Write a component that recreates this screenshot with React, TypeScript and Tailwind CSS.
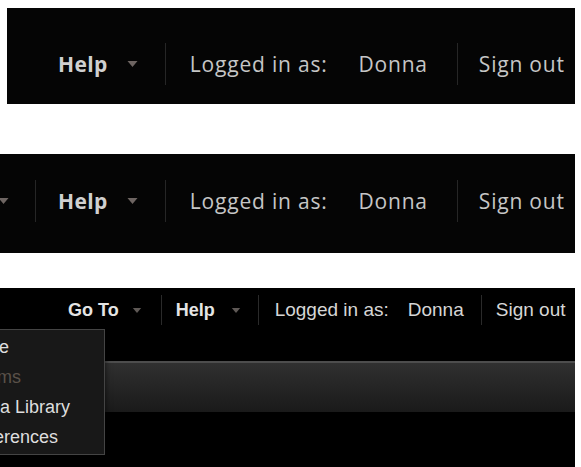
import React from 'react'

function Caret({ className = '' }: { className?: string }) {
  return (
    <svg viewBox="0 0 10 6" className={`shrink-0 ${className}`}>
      <path d="M0 0h10L5 6z" fill="currentColor" />
    </svg>
  )
}

function Divider({ className = '' }: { className?: string }) {
  return <span className={`block w-px shrink-0 ${className}`} />
}

// user strip in the large Segoe-like style
function UserBar({ leading = false }: { leading?: boolean }) {
  return (
    <div className="flex items-center h-[42px] whitespace-nowrap font-['Open_Sans',sans-serif] text-[21px] leading-[21px] tracking-[0.8px] text-[#c6c6c6]">
      {leading && (
        <>
          <Caret className="w-[11px] h-[6px] -ml-[2px] text-[#6e6562]" />
          <Divider className="h-[42px] ml-[26px] bg-[#262626]" />
        </>
      )}
      <span className={`font-bold tracking-[0.4px] text-[#d0d0d0] ${leading ? 'ml-[22px]' : 'ml-[51px]'}`}>Help</span>
      <Caret className="w-[11px] h-[6px] ml-[19px] text-[#6e6562]" />
      <Divider className="h-[42px] ml-[27px] bg-[#262626]" />
      <span className="ml-[24px]">Logged in as:</span>
      <span className="ml-[31px]">Donna</span>
      <Divider className="h-[42px] ml-[29px] bg-[#262626]" />
      <span className="ml-[21px]">Sign out</span>
    </div>
  )
}

function Menu() {
  const items = [
    { label: 'Home', muted: false },
    { label: 'Albums', muted: true },
    { label: 'Media Library', muted: false },
    { label: 'Preferences', muted: false },
  ]
  return (
    <div className="absolute left-[-45px] top-[41px] w-[150px] h-[126px] border border-[#444444] bg-[#181818] py-[2px] shadow-[0_2px_6px_rgba(0,0,0,0.7)]">
      {items.map(item => (
        <div
          key={item.label}
          className={`h-[30px] flex items-center pl-[5px] whitespace-nowrap text-[18px] ${item.muted ? 'text-[#5a5149]' : 'text-[#dedede]'}`}
        >
          {item.label}
        </div>
      ))}
    </div>
  )
}

export default function App() {
  return (
    <div className="w-[581px] h-[467px] bg-white overflow-hidden">
      <div className="h-[8px]" />
      <div className="ml-[7px] w-[568px] h-[96px] pt-[35px] bg-[#050505] overflow-hidden">
        <UserBar />
      </div>
      <div className="h-[50px]" />
      <div className="w-[575px] h-[99px] pt-[26px] bg-[#050505] overflow-hidden">
        <UserBar leading />
      </div>
      <div className="h-[35px]" />
      <div className="relative w-[575px] h-[179px] bg-black font-['Liberation_Sans',Arial,sans-serif]">
        {/* top nav */}
        <div className="flex items-center h-[44px] whitespace-nowrap text-[19px] text-[#d6d6d6]">
          <span className="ml-[68px] text-[18px] font-bold text-[#e4e4e4]">Go To</span>
          <Caret className="w-[10px] h-[5px] ml-[13px] text-[#5f5956]" />
          <Divider className="h-[30px] ml-[19px] bg-[#2a2a2a]" />
          <span className="ml-[14px] text-[18px] font-bold text-[#e4e4e4]">Help</span>
          <Caret className="w-[10px] h-[5px] ml-[16px] text-[#5f5956]" />
          <Divider className="h-[30px] ml-[17px] bg-[#2a2a2a]" />
          <span className="ml-[16px]">Logged in as:</span>
          <span className="ml-[19px]">Donna</span>
          <Divider className="h-[30px] ml-[17px] bg-[#2a2a2a]" />
          <span className="ml-[14px]">Sign out</span>
        </div>
        <div className="h-[29px]" />
        <div className="h-[2px] bg-[#4d4d4d]" />
        <div className="h-[49px] bg-gradient-to-b from-[#303030] to-[#1a1a1a]" />
        <Menu />
      </div>
    </div>
  )
}
